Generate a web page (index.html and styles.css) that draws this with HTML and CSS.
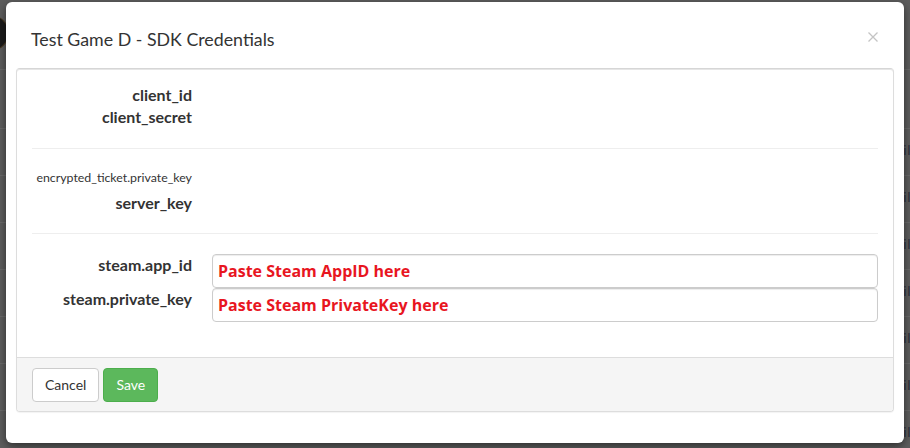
FILE: index.html
```html
<!DOCTYPE html>
<html>
<head>
<meta charset="utf-8">
<link rel="stylesheet" href="styles.css">
</head>
<body>
<div class="page">
  <div class="page-top"><span class="avatar"></span></div>
  <div class="page-head"></div>
  <div class="page-row"><span class="cell">il</span></div>
  <div class="page-row"><span class="cell">il</span></div>
  <div class="page-row"><span class="cell">il</span></div>
  <div class="page-row"><span class="cell">il</span></div>
  <div class="page-row"><span class="cell">il</span></div>
  <div class="page-row"><span class="cell">il</span></div>
  <div class="page-row"><span class="cell">il</span></div>
</div>

<div class="modal">
  <div class="modal-header">
    <h4 class="modal-title">Test Game D - SDK Credentials</h4>
    <svg class="close" width="10" height="10" viewBox="0 0 10 10"><path d="M0.5 0.5 L9.5 9.5 M9.5 0.5 L0.5 9.5" stroke="#c4c4c4" stroke-width="1.3" fill="none"/></svg>
  </div>
  <div class="panel">
    <div class="panel-body">
      <div class="section">
        <div class="label">client_id</div><div></div>
        <div class="label">client_secret</div><div></div>
      </div>
      <hr class="sep sep-1">
      <div class="section">
        <div class="label label-small">encrypted_ticket.private_key</div><div></div>
        <div class="label label-gap">server_key</div><div></div>
      </div>
      <hr class="sep sep-2">
      <div class="section section-inputs">
        <div class="label label-top">steam.app_id</div>
        <input class="field" type="text" value="Paste Steam AppID here">
        <div class="label label-top">steam.private_key</div>
        <input class="field" type="text" value="Paste Steam PrivateKey here">
      </div>
    </div>
    <div class="panel-footer">
      <button class="btn btn-default">Cancel</button>
      <button class="btn btn-success">Save</button>
    </div>
  </div>
</div>
</body>
</html>
```

FILE: styles.css
```css
html, body {
  margin: 0;
  padding: 0;
}
body {
  width: 910px;
  height: 448px;
  overflow: hidden;
  background: #5d5d5d;
  font-family: Lato, "Liberation Sans", sans-serif;
  position: relative;
}

/* dimmed page behind the modal */
.page {
  width: 910px;
  height: 448px;
  overflow: hidden;
}
.page-top {
  height: 69px;
  border-bottom: 1px solid #6a6a6a;
  position: relative;
}
.avatar {
  position: absolute;
  left: -26px;
  top: 16px;
  width: 34px;
  height: 34px;
  border-radius: 50%;
  background: #1b1b1b;
  box-shadow: 0 0 0 1px #4a3a22;
}
.page-head {
  height: 58px;
  border-bottom: 1px solid #6a6a6a;
}
.page-row {
  height: 46px;
  border-bottom: 1px solid #6a6a6a;
  display: flex;
  justify-content: flex-end;
  align-items: center;
}
.cell {
  font-family: "DejaVu Sans", sans-serif;
  font-size: 12px;
  color: #262a3a;
  letter-spacing: 0.5px;
  margin-right: -1px;
  margin-top: -2px;
}

/* modal */
.modal {
  position: absolute;
  left: 6px;
  top: 2px;
  width: 898px;
  height: 441px;
  box-sizing: border-box;
  background: #fff;
  border-radius: 6px;
  box-shadow: 0 3px 9px rgba(0, 0, 0, 0.5);
  padding: 0 10px;
}
.modal-header {
  display: flex;
  justify-content: space-between;
  align-items: flex-start;
  padding: 27px 16px 19px 15px;
  height: 20px;
}
.modal-title {
  margin: 0;
  font-size: 17.8px;
  font-weight: 400;
  line-height: 20px;
  color: #333;
}
.close {
  margin-top: 3px;
}

.panel {
  border: 1px solid #ddd;
  border-top-color: #d6d6d6;
  border-radius: 4px;
  box-shadow: 0 1px 1px rgba(0, 0, 0, 0.05), inset 0 1px 0 #e6e6e6;
}
.panel-body {
  padding: 15px 15px 35px;
}
.section {
  display: grid;
  grid-template-columns: 160px 1fr;
  column-gap: 20px;
}
.label {
  text-align: right;
  font-weight: 700;
  font-size: 16px;
  line-height: 22px;
  color: #333;
  white-space: nowrap;
}
.label-small {
  font-size: 12.35px;
  font-weight: 400;
}
.label-gap {
  margin-top: 3px;
}
.label-top {
  padding-top: 0;
}
.sep {
  border: 0;
  border-top: 1px solid #eee;
  margin: 0;
}
.sep-1 {
  margin-top: 20px;
  margin-bottom: 18px;
}
.sep-2 {
  margin-top: 19px;
  margin-bottom: 20px;
}
.section-inputs {
  grid-auto-rows: 34px;
}
.field {
  box-sizing: border-box;
  width: 100%;
  height: 34px;
  margin: 0;
  padding: 0 5px;
  border: 1px solid #ccc;
  border-radius: 4px;
  box-shadow: inset 0 1px 1px rgba(0, 0, 0, 0.075);
  font-family: "Open Sans", "Liberation Sans", sans-serif;
  font-weight: 700;
  font-size: 16px;
  color: #e8161f;
  background: #fff;
  outline: none;
}

.panel-footer {
  background: #f5f5f5;
  border-top: 1px solid #ddd;
  border-radius: 0 0 3px 3px;
  padding: 10px 15px 9px;
  display: flex;
  gap: 4px;
}
.btn {
  height: 34px;
  box-sizing: border-box;
  padding: 6px 12px;
  font-family: Lato, "Liberation Sans", sans-serif;
  font-size: 14px;
  line-height: 20px;
  border-radius: 4px;
  border: 1px solid transparent;
  margin: 0;
}
.btn-default {
  background: #fff;
  border-color: #ccc;
  color: #333;
}
.btn-success {
  background: #5cb85c;
  border-color: #4cae4c;
  color: #fff;
}
```
